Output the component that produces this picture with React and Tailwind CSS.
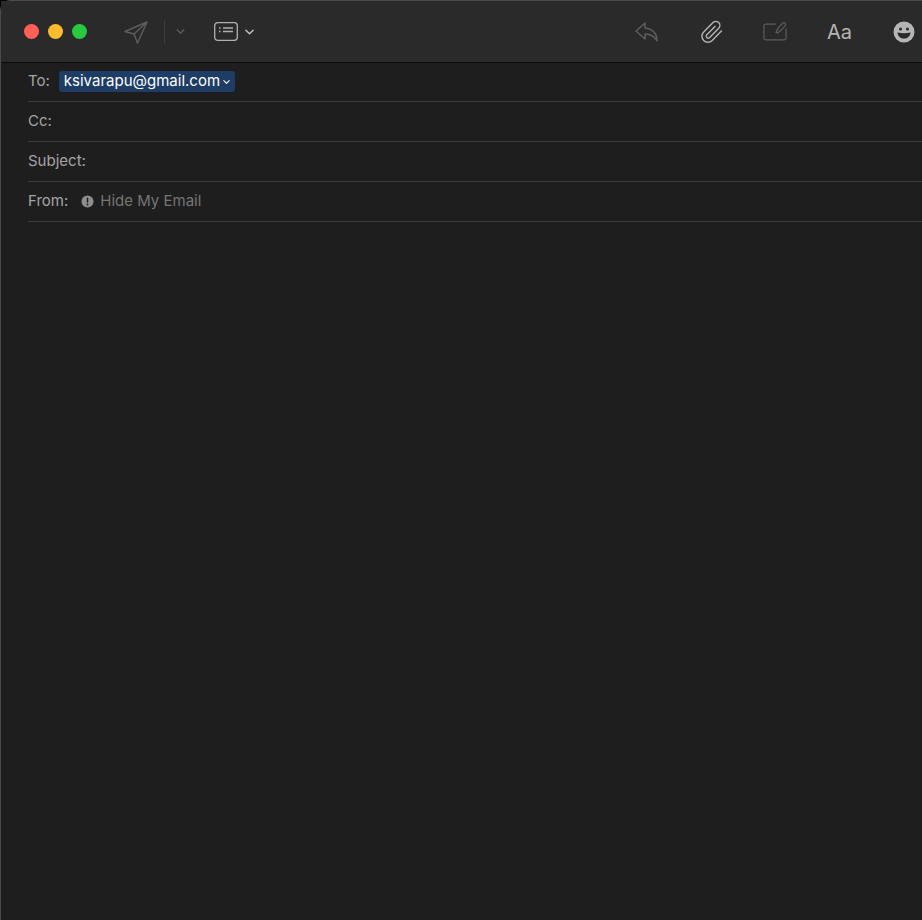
import React from "react";

const Chevron = ({ className }) => (
  <svg viewBox="0 0 10 6" className={className} fill="none" stroke="currentColor" strokeWidth="1.6" strokeLinecap="round" strokeLinejoin="round">
    <path d="M1 1l4 4 4-4" />
  </svg>
);

const Row = ({ label, children }) => (
  <div className="flex h-10 items-center border-b border-[#3a3a3a] text-[15px] text-[#a5a5a5]">
    <span>{label}</span>
    {children}
  </div>
);

export default function App() {
  return (
    <div className="h-[920px] w-[922px] overflow-hidden bg-black font-['Inter','Liberation_Sans',sans-serif]">
      <div className="h-full rounded-tl-[10px] border-l border-t border-[#4a4a4a] bg-[#1e1e1e]">
        <div className="flex h-[62px] items-center border-b border-[#0c0c0c] bg-[#2a2a2a] pl-[23px]">
          <div className="flex items-center gap-[9px]">
            <span className="h-[15px] w-[15px] rounded-full bg-[#ff5f57]" />
            <span className="h-[15px] w-[15px] rounded-full bg-[#febc2e]" />
            <span className="h-[15px] w-[15px] rounded-full bg-[#28c840]" />
          </div>
          <svg viewBox="0 0 24 24" className="ml-[37px] h-6 w-6 text-[#5c5c5c]" fill="none" stroke="currentColor" strokeWidth="1.5" strokeLinejoin="round">
            <path d="M23 2 1 11.5l9 2.5 3.5 9L23 2ZM10 14 23 2" />
          </svg>
          <span className="ml-[16px] h-6 w-px bg-[#3d3d3d]" />
          <Chevron className="ml-[11px] h-[5px] w-[9px] text-[#5c5c5c]" />
          <svg viewBox="0 0 24 19" className="ml-[29px] h-[19px] w-6 text-[#b0b0b0]" fill="none" stroke="currentColor" strokeWidth="1.3">
            <rect x="0.7" y="0.7" width="22.6" height="17.6" rx="3" />
            <path d="M5 6h1.5M9 6h10M5 9.5h1.5M9 9.5h10" />
          </svg>
          <Chevron className="ml-[7px] h-[6px] w-[9px] text-[#c0c0c0]" />
          <svg viewBox="0 0 24 20" className="ml-[381px] h-5 w-6 text-[#5c5c5c]" fill="none" stroke="currentColor" strokeWidth="1.5" strokeLinejoin="round">
            <path d="M10 1 1 9l9 8v-5c5 0 9 1 12 7 0-8-4-12-12-13V1Z" />
          </svg>
          <svg viewBox="0 0 24 24" className="ml-[41px] h-6 w-6 text-[#b5b5b5]" fill="none" stroke="currentColor" strokeWidth="1.4" strokeLinecap="round" strokeLinejoin="round">
            <path d="M21.4 11 12.2 20.5a6 6 0 0 1-8.5-8.5L13 2.6a4 4 0 0 1 5.7 5.7l-9.3 9.4a2 2 0 0 1-2.8-2.8L15 6.5" />
          </svg>
          <svg viewBox="0 0 26 22" className="ml-[39px] h-[21px] w-6 text-[#5c5c5c]" fill="none" stroke="currentColor" strokeWidth="1.3" strokeLinejoin="round">
            <path d="M14 3H3a2 2 0 0 0-2 2v13a2 2 0 0 0 2 2h20a2 2 0 0 0 2-2V8" />
            <path d="M14 12c1-3 5-8 8-10.500 1.500-.5 3 1 2.500 2.500-2 3-6 7-8.500 8.500l-2-.5Z" />
          </svg>
          <span className="ml-[40px] w-6 text-[20px] text-[#b5b5b5]">Aa</span>
          <svg viewBox="0 0 22 22" className="ml-[42px] h-[22px] w-[22px] shrink-0">
            <circle cx="11" cy="11" r="10.500" fill="#b5b5b5" />
            <circle cx="7.500" cy="8" r="1.500" fill="#2a2a2a" />
            <circle cx="14.500" cy="8" r="1.500" fill="#2a2a2a" />
            <path d="M4.500 11.500c4 1 9 1 13 0-.5 4-3 6-6.500 6s-6-2-6.500-6Z" fill="#2a2a2a" />
          </svg>
        </div>
        <div className="ml-[27px]">
          <div className="-mt-px">
            <Row label="To:">
              <span className="ml-[9px] flex h-[21px] items-center rounded-[3px] bg-[#1d3c66] pl-[5px] pr-[5px] text-white">
                ksivarapu@gmail.com
                <Chevron className="ml-[3px] h-1 w-[7px] text-white" />
              </span>
            </Row>
          </div>
          <Row label="Cc:" />
          <Row label="Subject:" />
          <Row label="From:">
            <svg viewBox="0 0 14 14" className="ml-[13px] h-[13px] w-[13px]">
              <circle cx="7" cy="7" r="6.500" fill="#8e8e8e" />
              <path d="M7 3.500v4" stroke="#1e1e1e" strokeWidth="1.600" strokeLinecap="round" />
              <circle cx="7" cy="10.200" r="1" fill="#1e1e1e" />
            </svg>
            <span className="ml-[6px] text-[#757575]">Hide My Email</span>
          </Row>
        </div>
      </div>
    </div>
  );
}
